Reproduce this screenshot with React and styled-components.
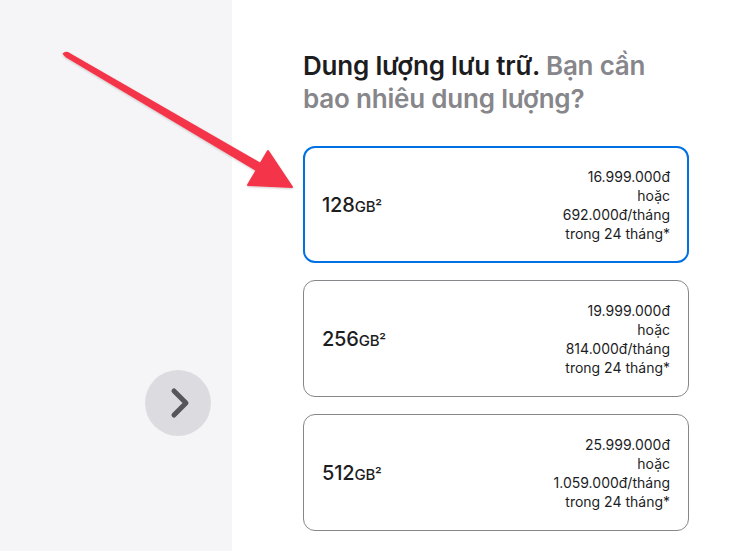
import React from 'react';
import styled, { createGlobalStyle } from 'styled-components';

const Global = createGlobalStyle`
  html, body { margin: 0; padding: 0; background: #fff; }
  body { font-family: Inter, "Noto Sans", sans-serif; color: #1d1d1f; }
`;

const Page = styled.div`
  position: relative;
  width: 750px;
  height: 551px;
  display: flex;
  overflow: hidden;
`;

const Side = styled.div`
  width: 232px;
  flex-shrink: 0;
  background: #f5f5f7;
  display: flex;
  flex-direction: column;
  align-items: flex-end;
  padding: 370px 21px 0 0;
  box-sizing: border-box;
`;

const NextButton = styled.button`
  width: 66px;
  height: 66px;
  border-radius: 50%;
  border: none;
  background: #dcdce0;
  display: flex;
  align-items: center;
  justify-content: center;
  padding: 0 0 0 3px;
`;

const Main = styled.div`
  flex: 1;
  padding: 49px 0 0 71px;
`;

const Heading = styled.h2`
  margin: 0 0 31px;
  width: 370px;
  font-size: 26px;
  line-height: 33px;
  font-weight: 600;
  letter-spacing: -0.2px;
  color: #1d1d1f;
`;

const Muted = styled.span`
  color: #86868b;
`;

const List = styled.div`
  display: flex;
  flex-direction: column;
  gap: 17px;
  width: 386px;
`;

const Card = styled.div`
  height: 117px;
  box-sizing: border-box;
  border-radius: 12px;
  border: ${p => (p.$selected ? '2px solid #0071e3' : '1px solid #86868b')};
  padding: ${p => (p.$selected ? '0 17px 0 17px' : '0 18px 0 18px')};
  display: flex;
  align-items: center;
  justify-content: space-between;
`;

const Size = styled.div`
  font-size: 20px;
  font-weight: 500;
  letter-spacing: -0.2px;
`;

const Unit = styled.span`
  font-size: 15px;
  font-weight: 500;
`;

const Price = styled.div`
  text-align: right;
  font-size: 14px;
  line-height: 19px;
  color: #1d1d1f;
`;

const ArrowLayer = styled.svg`
  position: absolute;
  left: 0;
  top: 0;
  pointer-events: none;
`;

const options = [
  { size: '128', price: '16.999.000đ', monthly: '692.000đ/tháng', selected: true },
  { size: '256', price: '19.999.000đ', monthly: '814.000đ/tháng' },
  { size: '512', price: '25.999.000đ', monthly: '1.059.000đ/tháng' },
];

export default function App() {
  return (
    <Page>
      <Global />
      <Side>
        <NextButton aria-label="Next">
          <svg width="24" height="32" viewBox="0 0 24 32">
            <path d="M6 4 L18 16 L6 28" fill="none" stroke="#55555a" strokeWidth="5" strokeLinecap="round" strokeLinejoin="round" />
          </svg>
        </NextButton>
      </Side>
      <Main>
        <Heading>
          Dung lượng lưu trữ. <Muted>Bạn cần bao nhiêu dung lượng?</Muted>
        </Heading>
        <List>
          {options.map(o => (
            <Card key={o.size} $selected={o.selected}>
              <Size>
                {o.size}
                <Unit>GB²</Unit>
              </Size>
              <Price>
                {o.price}
                <br />
                hoặc
                <br />
                {o.monthly}
                <br />
                trong 24 tháng*
              </Price>
            </Card>
          ))}
        </List>
      </Main>
      <ArrowLayer width="750" height="551" viewBox="0 0 750 551">
        <defs>
          <filter id="sh" x="-10%" y="-10%" width="120%" height="120%">
            <feDropShadow dx="0" dy="1" stdDeviation="1.2" floodColor="#000" floodOpacity="0.2" />
          </filter>
        </defs>
        <g filter="url(#sh)" fill="#f4364a">
          <path d="M62.5 53.5 Q64 56 66 57.5 L256 171 L261 163 L68 52 Q65 51 62.5 53.5 Z" />
          <path d="M248 185 L268 151 L292 187 Z" strokeLinejoin="round" stroke="#f4364a" strokeWidth="2" />
        </g>
      </ArrowLayer>
    </Page>
  );
}
